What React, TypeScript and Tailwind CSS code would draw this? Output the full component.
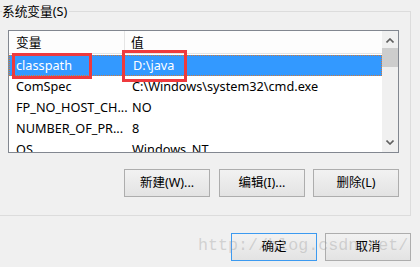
const rows = [
  { name: "classpath", value: "D:\\java", selected: true },
  { name: "ComSpec", value: "C:\\Windows\\system32\\cmd.exe" },
  { name: "FP_NO_HOST_CH...", value: "NO" },
  { name: "NUMBER_OF_PR...", value: "8" },
  { name: "OS", value: "Windows_NT" },
];

function Button({ label, primary }: { label: string; primary?: boolean }) {
  return (
    <button
      className={`flex h-[28px] w-[86px] items-center justify-center border bg-gradient-to-b from-[#f2f2f2] to-[#e3e3e3] text-[12.5px] text-black ${
        primary ? "border-[#3c9af0]" : "border-[#adadad]"
      }`}
    >
      {label}
    </button>
  );
}

function ScrollBar() {
  return (
    <div className="flex w-[16px] flex-col items-center bg-[#f0f0f0]">
      <div className="flex h-[17px] w-full items-center justify-center pt-[1px]">
        <svg width="8" height="5" viewBox="0 0 8 5">
          <path d="M0.5 4.5 L4 1 L7.5 4.5" fill="none" stroke="#606060" strokeWidth="1.6" />
        </svg>
      </div>
      <div className="h-[19px] w-full bg-[#cdcdcd]" />
      <div className="flex-1" />
      <div className="flex h-[17px] w-full items-center justify-center pb-[2px]">
        <svg width="8" height="5" viewBox="0 0 8 5">
          <path d="M0.5 0.5 L4 4 L7.5 0.5" fill="none" stroke="#606060" strokeWidth="1.6" />
        </svg>
      </div>
    </div>
  );
}

export default function App() {
  return (
    <div
      className="relative h-[267px] w-[420px] overflow-hidden bg-[#f0f0f0] text-[12.7px] text-black"
      style={{ fontFamily: '"Noto Sans", "Noto Sans CJK SC", sans-serif' }}
    >
      <div className="relative ml-[-2px] mt-[11px] h-[205px] w-[413px] border border-[#dcdcdc]">
        {/* group title sits over the top border */}
        <div className="absolute left-[3px] top-[-11px] bg-[#f0f0f0] pr-[2px] leading-[20px]">系统变量(S)</div>

        <div className="ml-[9px] mt-[18px] flex h-[123px] w-[391px] border border-[#828790] bg-white">
          <div className="flex min-w-0 flex-1 flex-col overflow-hidden">
            <div className="flex h-[23px] shrink-0 border-b border-[#e5e5e5] bg-[#fdfdfd]">
              <div className="flex w-[116px] items-center border-r border-[#e5e5e5] pl-[7px] pt-[1px]">变量</div>
              <div className="flex flex-1 items-center pl-[6px] pt-[1px]">值</div>
            </div>
            <div className="mt-[1px]">
              {rows.map((r) => (
                <div
                  key={r.name}
                  className={`flex h-[21px] items-center ${
                    r.selected ? "border border-dotted border-[#d07a3a] bg-[#3399ff] text-white" : ""
                  }`}
                >
                  <div className={`w-[116px] whitespace-nowrap ${r.selected ? "pl-[6px]" : "pl-[7px]"}`}>{r.name}</div>
                  <div className="whitespace-nowrap pl-[7px]">{r.value}</div>
                </div>
              ))}
            </div>
          </div>
          <ScrollBar />
        </div>

        <div className="ml-[125px] mt-[16px] flex gap-[8px]">
          <div className="mr-[1px]">
            <Button label="新建(W)..." />
          </div>
          <Button label="编辑(I)..." />
          <Button label="删除(L)" />
        </div>
      </div>

      <div className="mr-[9px] mt-[17px] flex justify-end gap-[8px]">
        <Button label="确定" primary />
        <Button label="取消" />
      </div>

      {/* red annotation boxes */}
      <div className="pointer-events-none absolute left-[12px] top-[53px] h-[26px] w-[80px] border-[3px] border-[#ee3a3e]" />
      <div className="pointer-events-none absolute left-[122px] top-[50px] h-[32px] w-[65px] border-[3px] border-[#ee3a3e]" />

      {/* watermark */}
      <div
        className="pointer-events-none absolute left-[198px] top-[234px] text-[16.7px] leading-[24px] text-[rgba(150,150,150,0.35)]"
        style={{ fontFamily: '"Liberation Mono", monospace' }}
      >
        http://blog.csdn.net/
      </div>
    </div>
  );
}
